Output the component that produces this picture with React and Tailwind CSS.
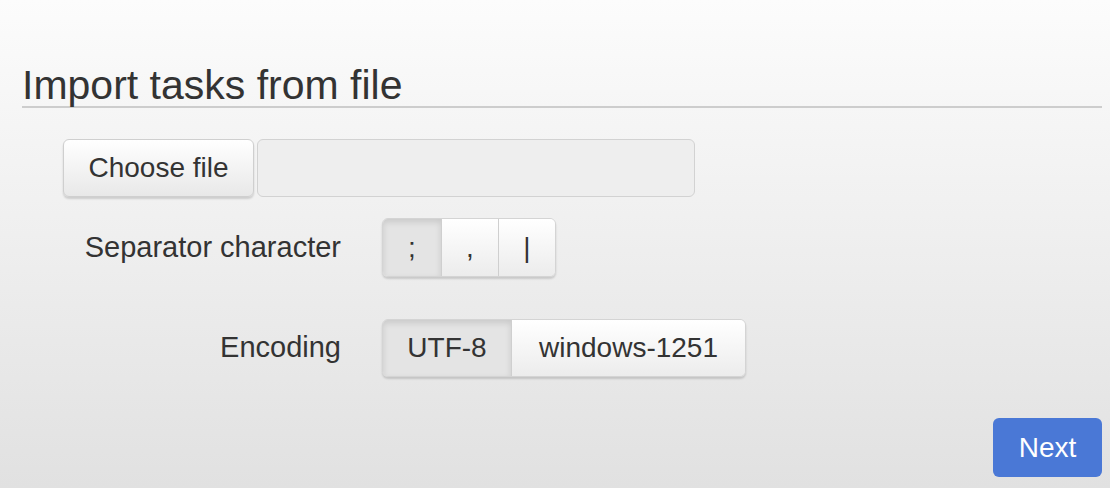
import React, { useState } from 'react';

const font = { fontFamily: '"Liberation Sans", Arial, sans-serif' };

const SegButton = ({ label, active, onClick, className }) => (
    <button
        onClick={onClick}
        className={`h-full flex items-center justify-center text-[28px] text-[#333333] border-l border-[#cfcfcf] first:border-l-0 ${active
            ? 'bg-[#e4e4e4] shadow-[inset_0_3px_6px_rgba(0,0,0,0.12)]'
            : 'bg-gradient-to-b from-white to-[#ececec]'} ${className}`}
    >
        {label}
    </button>
);

const App = () => {
    const [separator, setSeparator] = useState(';');
    const [encoding, setEncoding] = useState('UTF-8');

    return (
        <div
            style={font}
            className="w-[1110px] h-[488px] overflow-hidden bg-gradient-to-b from-[#fcfcfc] to-[#e1e1e1] pl-[22px] pr-[8px] text-[#333333]"
        >
            <h1 className="pt-[64px] text-[41px] leading-[42px] font-normal border-b-2 border-[#cdcdcd]">
                Import tasks from file
            </h1>

            {/* File picker */}
            <div className="mt-[31px] ml-[41px] flex gap-[3px] h-[58px]">
                <button className="w-[191px] h-full rounded-[6px] border border-[#cfcfcf] bg-gradient-to-b from-white to-[#e8e8e8] shadow-[0_2px_2px_rgba(0,0,0,0.15)] text-[28px] text-[#333333]">
                    Choose file
                </button>
                <div className="w-[438px] h-full rounded-[6px] border border-[#d2d2d2] bg-[#eeeeee]" />
            </div>

            {/* Separator */}
            <div className="mt-[21px] flex items-center h-[59px]">
                <label className="w-[319px] text-right text-[29px]">Separator character</label>
                <div className="ml-[41px] flex h-full rounded-[6px] border border-[#d4d4d4] overflow-hidden shadow-[0_2px_2px_rgba(0,0,0,0.15)]">
                    {[';', ',', '|'].map((s, i) => (
                        <SegButton
                            key={s}
                            label={s}
                            active={separator === s}
                            onClick={() => setSeparator(s)}
                            className={i === 0 ? 'w-[58px]' : 'w-[57px]'}
                        />
                    ))}
                </div>
            </div>

            {/* Encoding */}
            <div className="mt-[42px] flex items-center h-[58px]">
                <label className="w-[319px] text-right text-[29px]">Encoding</label>
                <div className="ml-[41px] flex h-full rounded-[6px] border border-[#d4d4d4] overflow-hidden shadow-[0_2px_2px_rgba(0,0,0,0.15)]">
                    <SegButton label="UTF-8" active={encoding === 'UTF-8'} onClick={() => setEncoding('UTF-8')} className="w-[128px]" />
                    <SegButton label="windows-1251" active={encoding === 'windows-1251'} onClick={() => setEncoding('windows-1251')} className="w-[234px]" />
                </div>
            </div>

            <div className="mt-[41px] flex justify-end">
                <button className="w-[109px] h-[59px] rounded-[6px] bg-[#4a78d6] text-white text-[28px]">
                    Next
                </button>
            </div>
        </div>
    );
};

export default App;
